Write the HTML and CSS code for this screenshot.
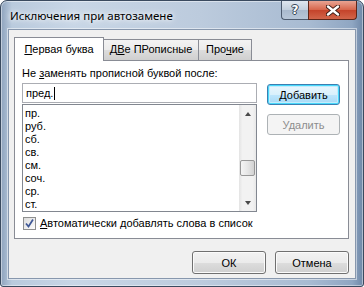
FILE: index.html
```html
<!DOCTYPE html>
<html lang="ru">

<head>
    <meta charset="UTF-8">
    <title>Исключения при автозамене</title>
    <link rel="stylesheet" href="styles.css">
</head>

<body>
    <div class="window">
        <div class="titlebar">
            <span class="title">Исключения при автозамене</span>
            <div class="caption-buttons">
                <span class="cap help">?</span>
                <span class="cap close">
                    <svg width="14" height="11" viewBox="0 0 14 11">
                        <path d="M2 1.5 L12 9.5 M12 1.5 L2 9.5" stroke="#3a1a14" stroke-width="4.2" stroke-linecap="round" fill="none"/>
                        <path d="M2 1.5 L12 9.5 M12 1.5 L2 9.5" stroke="#ffffff" stroke-width="2.4" stroke-linecap="round" fill="none"/>
                    </svg>
                </span>
            </div>
        </div>

        <div class="client">
            <div class="tabs">
                <div class="tab active"><u>П</u>ервая буква</div>
                <div class="tab tab-2">Д<u>В</u>е ПРописные</div>
                <div class="tab tab-3">Про<u>ч</u>ие</div>
            </div>

            <div class="panel">
                <div class="label">Не <u>з</u>аменять прописной буквой после:</div>

                <div class="row">
                    <div class="fields">
                        <div class="input">пред.<span class="caret"></span></div>
                        <div class="list">
                            <div class="items">
                                <div>пр.</div>
                                <div>руб.</div>
                                <div>сб.</div>
                                <div>св.</div>
                                <div>см.</div>
                                <div>соч.</div>
                                <div>ср.</div>
                                <div>ст.</div>
                            </div>
                            <div class="scrollbar">
                                <div class="arrow up"></div>
                                <div class="track"><div class="thumb"></div></div>
                                <div class="arrow down"></div>
                            </div>
                        </div>
                    </div>

                    <div class="side">
                        <button class="btn default"><u>Д</u>обавить</button>
                        <button class="btn disabled">Удалить</button>
                    </div>
                </div>

                <div class="check">
                    <span class="box">
                        <svg width="11" height="11" viewBox="0 0 11 11">
                            <path d="M2 5.5 L4.5 8.5 L9 1.5" stroke="#3f5896" stroke-width="1.7" fill="none"/>
                        </svg>
                    </span>
                    <span><u>А</u>втоматически добавлять слова в список</span>
                </div>
            </div>

            <div class="footer">
                <button class="btn">ОК</button>
                <button class="btn">Отмена</button>
            </div>
        </div>
    </div>
</body>

</html>
```

FILE: styles.css
```css
body {
    margin: 0;
    font-family: "Liberation Sans", Arial, sans-serif;
    font-size: 11px;
    color: #000;
}

u {
    text-decoration: underline;
    text-underline-offset: 1px;
}

.window {
    width: 364px;
    height: 287px;
    box-sizing: border-box;
    border: 1px solid #3a4a5f;
    border-radius: 7px 7px 3px 3px;
    background: linear-gradient(to right, #8ea3bd 0%, #b9cadd 3%, #c8d6e6 20%, #bccbdd 55%, #a8bbd2 85%, #8fa6c2 97%, #6f88a8 100%);
    box-shadow: inset 0 0 0 1px rgba(255, 255, 255, 0.45);
    display: flex;
    flex-direction: column;
    overflow: hidden;
}

.titlebar {
    height: 28px;
    display: flex;
    justify-content: space-between;
    align-items: flex-start;
    padding: 0 6px 0 9px;
}

.title {
    font-family: "Noto Sans", sans-serif;
    font-size: 11.5px;
    line-height: 28px;
    padding-top: 1px;
    text-shadow: 0 0 8px #fff, 0 0 4px #fff;
}

.caption-buttons {
    display: flex;
}

.cap {
    height: 19px;
    box-sizing: border-box;
    border: 1px solid #4c5a6e;
    border-top: none;
    display: flex;
    align-items: center;
    justify-content: center;
}

.help {
    width: 27px;
    border-right: none;
    border-radius: 0 0 0 4px;
    background: linear-gradient(#dfe6ef, #c2cfdd 50%, #a9b9cd 51%, #b7c6d8);
    color: #fff;
    font-family: "DejaVu Sans", sans-serif;
    font-weight: bold;
    font-size: 12px;
    text-shadow: 0 0 1px #2c3a4c, 1px 0 0 #3c4a5c, -1px 0 0 #3c4a5c, 0 1px 0 #3c4a5c, 0 -1px 0 #3c4a5c;
}

.close {
    width: 49px;
    border-color: #5e2619;
    border-radius: 0 0 4px 0;
    background: linear-gradient(#e8a493, #d6644a 50%, #c5432a 51%, #d2654a);
}

.client {
    margin: 0 7px 7px 7px;
    height: 250px;
    box-sizing: border-box;
    border: 1px solid #8797ad;
    background: #f0f0f0;
    box-shadow: 0 0 0 1px rgba(255, 255, 255, 0.5);
    padding: 7px 6px 0 5px;
    display: flex;
    flex-direction: column;
}

.tabs {
    display: flex;
    align-items: flex-end;
    height: 24px;
    position: relative;
    z-index: 1;
}

.tab {
    box-sizing: border-box;
    height: 21px;
    border: 1px solid #898c95;
    border-bottom: none;
    background: linear-gradient(#f3f3f3, #ebebeb 50%, #dddddd 51%, #cfcfcf);
    padding-top: 3px;
    text-align: center;
    margin-bottom: 1px;
}

.tab.active {
    width: 90px;
    height: 24px;
    background: #fff;
    padding-top: 5px;
    margin-bottom: 0;
}

.tab-2 {
    width: 95px;
    border-left: none;
}

.tab-3 {
    width: 53px;
    border-left: none;
}

.panel {
    margin-top: -1px;
    width: 335px;
    height: 179px;
    box-sizing: border-box;
    border: 1px solid #898c95;
    background: #fff;
    padding: 6px 0 0 7px;
}

.label {
    line-height: 13px;
}

.row {
    display: flex;
    margin-top: 3px;
}

.fields {
    width: 235px;
}

.input {
    height: 20px;
    box-sizing: border-box;
    border: 1px solid #abadb3;
    padding: 3px 0 0 3px;
    line-height: 13px;
}

.caret {
    display: inline-block;
    width: 1px;
    height: 13px;
    background: #000;
    vertical-align: top;
    margin-left: 1px;
}

.list {
    margin-top: 1px;
    height: 108px;
    box-sizing: border-box;
    border: 1px solid #828790;
    display: flex;
}

.items {
    flex: 1;
    padding: 2px 0 0 2px;
    line-height: 13px;
}

.scrollbar {
    width: 17px;
    display: flex;
    flex-direction: column;
    background: linear-gradient(to right, #e3e3e3, #f2f2f2 20%, #f2f2f2 80%, #e8e8e8);
}

.arrow {
    height: 17px;
    display: flex;
    align-items: center;
    justify-content: center;
}

.arrow::before {
    content: "";
    border-left: 3.5px solid transparent;
    border-right: 3.5px solid transparent;
}

.arrow.up::before {
    border-bottom: 4px solid #4a4a4a;
}

.arrow.down::before {
    border-top: 4px solid #4a4a4a;
}

.track {
    flex: 1;
    padding-top: 38px;
}

.thumb {
    height: 16px;
    margin: 0 1px;
    box-sizing: border-box;
    border: 1px solid #979797;
    border-radius: 2px;
    background: linear-gradient(to right, #f4f4f4, #e6e6e6 50%, #d2d2d2);
}

.side {
    display: flex;
    flex-direction: column;
    gap: 9px;
    margin-left: 10px;
    padding-top: 1px;
}

.btn {
    font-family: "Liberation Sans", Arial, sans-serif;
    font-size: 11px;
    color: #000;
    width: 73px;
    height: 21px;
    padding: 0;
    border: 1px solid #707070;
    border-radius: 3px;
    background: linear-gradient(#f2f2f2, #ebebeb 50%, #dddddd 51%, #cfcfcf);
    box-shadow: inset 0 0 0 1px #fbfbfb;
}

.btn.default {
    border-color: #3c7fb1;
    background: linear-gradient(#eaf6fd, #d9f0fc 50%, #bee6fd 51%, #a7d9f5);
    box-shadow: inset 0 0 0 1px #48d8fb, inset 0 0 0 2px #c3ecfc;
}

.btn.disabled {
    color: #8d8d8d;
    border-color: #adb2b5;
    background: #f4f4f4;
    box-shadow: none;
}

.check {
    display: flex;
    align-items: center;
    margin-top: 5px;
    line-height: 13px;
}

.box {
    width: 13px;
    height: 13px;
    box-sizing: border-box;
    border: 1px solid #8e8f8f;
    background: linear-gradient(135deg, #dcdcdc, #fdfdfd);
    display: flex;
    align-items: center;
    justify-content: center;
    margin: 0 4px 0 1px;
}

.footer {
    display: flex;
    justify-content: flex-end;
    gap: 9px;
    margin-top: 12px;
    padding-right: 0;
}

.footer .btn {
    width: 74px;
    height: 23px;
}
```
